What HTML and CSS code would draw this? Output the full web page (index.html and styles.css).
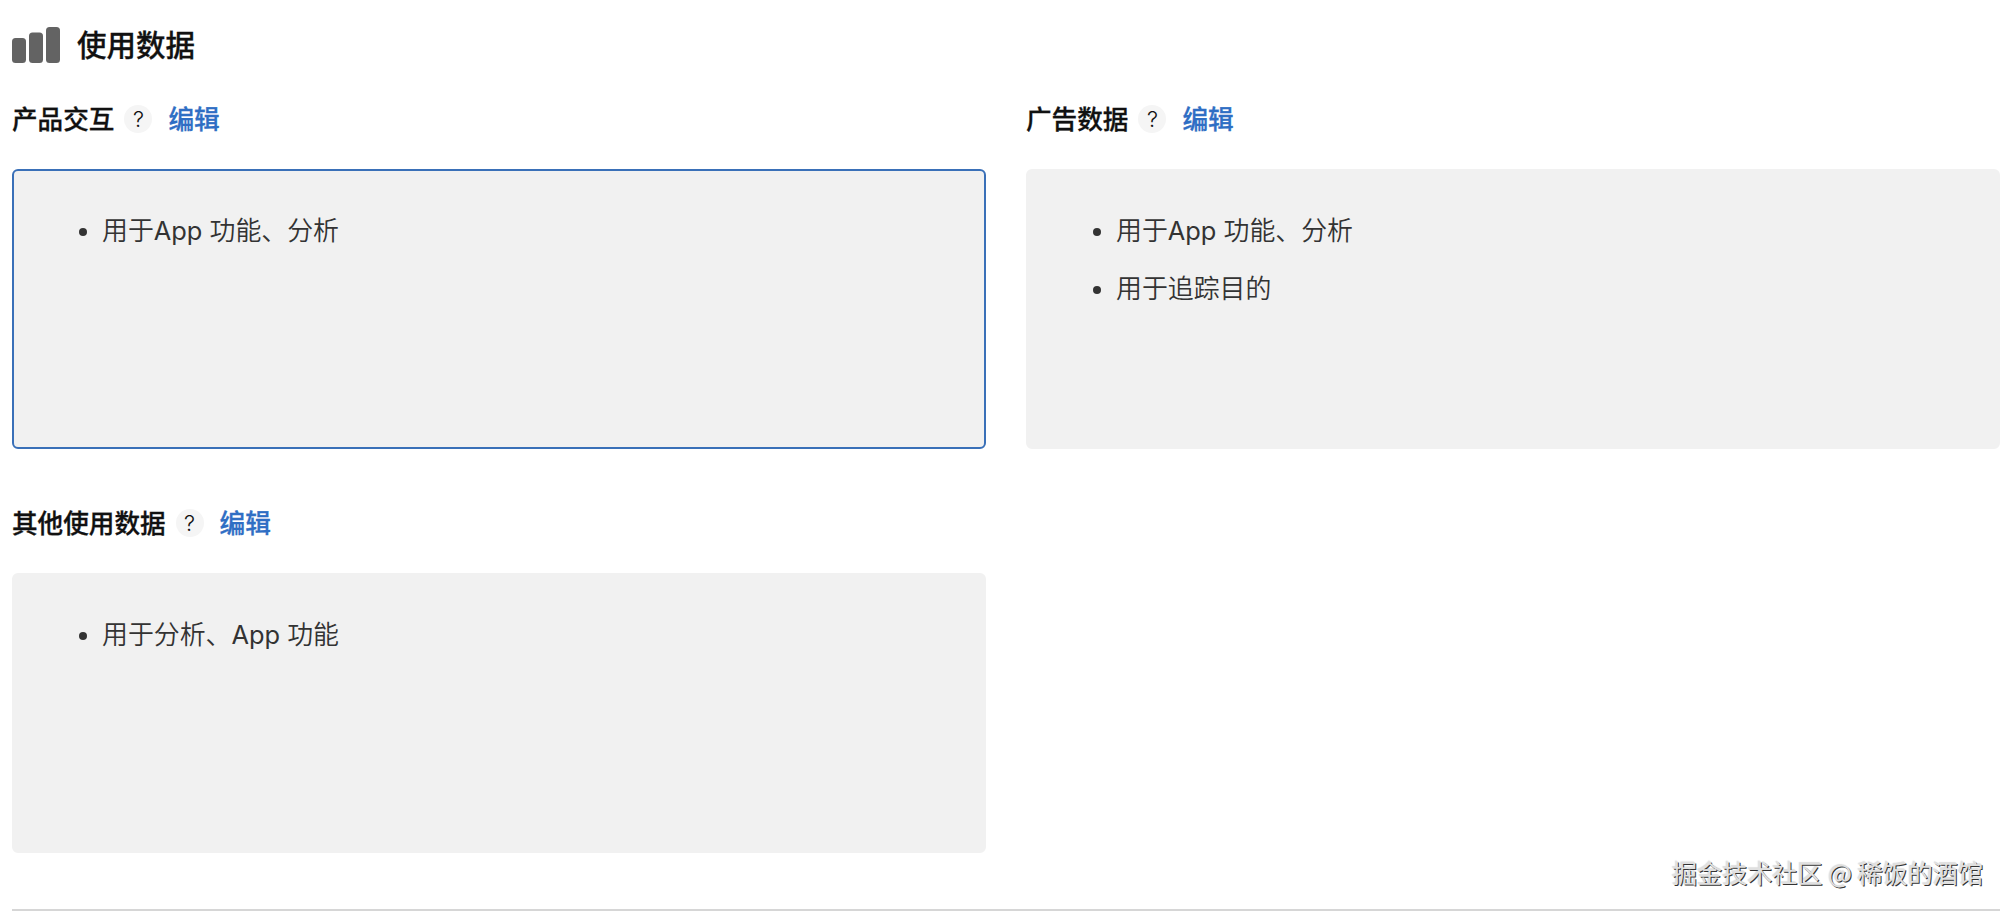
FILE: index.html
```html
<!DOCTYPE html>
<html lang="zh-CN">
<head>
    <meta charset="UTF-8">
    <meta name="viewport" content="width=device-width, initial-scale=1.0">
    <title>使用数据</title>
    <link rel="stylesheet" href="styles.css">
</head>
<body>
    <section class="category">
        <header class="category-header">
            <svg class="category-icon" width="48" height="36" viewBox="0 0 48 36" fill="#636363">
                <rect x="0" y="11" width="14" height="25" rx="3.5"/>
                <rect x="17" y="5.5" width="14" height="30.5" rx="3.5"/>
                <rect x="34" y="0" width="14" height="36" rx="3.5"/>
            </svg>
            <h2>使用数据</h2>
        </header>

        <div class="grid">
            <div class="item">
                <div class="item-header">
                    <h3>产品交互</h3>
                    <span class="help">?</span>
                    <a class="edit">编辑</a>
                </div>
                <div class="box selected">
                    <ul>
                        <li><p>用于<span class="latin">App </span>功能、分析</p></li>
                    </ul>
                </div>
            </div>

            <div class="item">
                <div class="item-header">
                    <h3>广告数据</h3>
                    <span class="help">?</span>
                    <a class="edit">编辑</a>
                </div>
                <div class="box">
                    <ul>
                        <li><p>用于<span class="latin">App </span>功能、分析</p></li>
                        <li><p>用于追踪目的</p></li>
                    </ul>
                </div>
            </div>

            <div class="item">
                <div class="item-header">
                    <h3>其他使用数据</h3>
                    <span class="help">?</span>
                    <a class="edit">编辑</a>
                </div>
                <div class="box">
                    <ul>
                        <li><p>用于分析、<span class="latin">App </span>功能</p></li>
                    </ul>
                </div>
            </div>
        </div>
    </section>

    <div class="watermark">掘金技术社区 @ 稀饭的酒馆</div>
</body>
</html>
```
FILE: styles.css
```css
* {
    box-sizing: border-box;
}

body {
    margin: 0;
    height: 912px;
    overflow: hidden;
    background: #fff;
    color: #111;
    font-family: Inter, "Noto Sans CJK SC", sans-serif;
}

h2, h3, ul, p {
    margin: 0;
    padding: 0;
}

.category {
    margin: 0 8px 0 12px;
    height: 911px;
    padding-top: 22px;
    border-bottom: 2px solid #d6d6d6;
}

/* Title */
.category-header {
    display: flex;
    align-items: center;
    height: 46px;
}

.category-icon {
    margin-right: 17px;
}

h2 {
    font-size: 29.5px;
    font-weight: 500;
    line-height: 46px;
    -webkit-text-stroke: 0.3px;
}

/* Data types */
.grid {
    display: grid;
    grid-template-columns: 1fr 1fr;
    column-gap: 40px;
    row-gap: 54px;
    margin-top: 31px;
}

.item-header {
    display: flex;
    align-items: center;
    height: 40px;
    margin-bottom: 30px;
}

h3 {
    padding-top: 1px;
    font-size: 25.6px;
    font-weight: 500;
    line-height: 40px;
    -webkit-text-stroke: 0.3px;
}

.help {
    width: 28px;
    height: 28px;
    margin: 0 16px 0 10px;
    border-radius: 50%;
    background: #f5f5f5;
    font-size: 22px;
    font-weight: 300;
    line-height: 28px;
    text-align: center;
}

.edit {
    padding-top: 1px;
    color: #2f6ec4;
    font-size: 25.7px;
    font-weight: 500;
    line-height: 40px;
    -webkit-text-stroke: 0.3px;
}

.box {
    height: 280px;
    padding: 41px 40px;
    border: 2px solid #f1f1f1;
    border-radius: 6px;
    background: #f1f1f1;
}

.selected {
    border-color: #3a70b8;
}

ul {
    list-style: none;
}

li {
    display: flex;
    align-items: center;
    height: 38px;
    margin-bottom: 20px;
    padding-left: 25px;
    color: #333;
    font-size: 25.9px;
    font-weight: 350;
    line-height: 38px;
}

li::before {
    content: "";
    width: 8px;
    height: 8px;
    margin: 2px 15px 0 0;
    border-radius: 50%;
    background: #333;
}

.latin {
    font-size: 25.4px;
    font-weight: 400;
}

.watermark {
    position: absolute;
    right: 25px;
    bottom: 22px;
    color: #e0e0e0;
    font-family: "Noto Sans CJK SC", sans-serif;
    font-size: 25.1px;
    line-height: 36px;
    text-shadow: 1px 1px 0 #333, -1px -1px 1px #ddd;
}
```
